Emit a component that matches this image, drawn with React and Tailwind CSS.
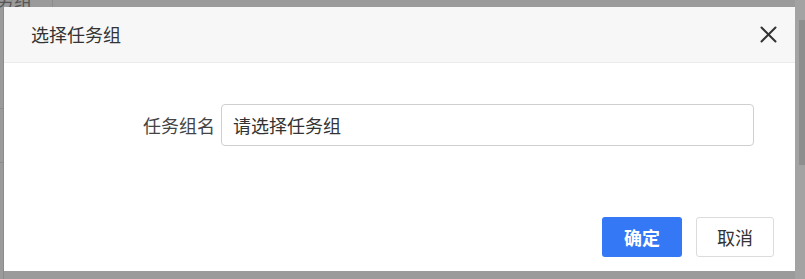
const font = { fontFamily: '"Noto Sans CJK SC", "Noto Sans", sans-serif' };

const Backdrop = () => (
  <div className="absolute inset-0 overflow-hidden">
    {/* faded page content behind the overlay */}
    <div className="absolute left-0 top-0 h-full w-[4px] border-r border-[#8c8c8c]"></div>
    <div className="absolute left-[52px] top-0 h-[7px] border-l border-[#8c8c8c]"></div>
    <div className="absolute left-[-4px] top-[-14px] text-[18px] text-[#555]">务组</div>
    <div className="absolute left-0 top-[108px] w-[4px] border-t border-[#8c8c8c]"></div>
    <div className="absolute left-0 top-[162px] w-[4px] border-t border-[#8c8c8c]"></div>
    <div className="absolute right-0 top-0 h-full w-[10px] bg-[#a3a3a3]">
      <div className="ml-[4px] mt-[20px] h-[145px] w-[6px] bg-[#8e8e8e]"></div>
    </div>
  </div>
);

const CloseIcon = () => (
  <svg width="17" height="17" viewBox="0 0 17 17" fill="none" stroke="currentColor" strokeWidth="2" strokeLinecap="round">
    <path d="M1.5 1.5 15.5 15.5" />
    <path d="M15.5 1.5 1.5 15.5" />
  </svg>
);

const App = () => {
  return (
    <div className="relative h-[279px] w-[805px] overflow-hidden bg-[#9b9b9b]" style={font}>
      <Backdrop />

      <div className="absolute left-[4px] top-[7px] flex h-[264px] w-[791px] flex-col bg-white">
        <div className="flex h-[56px] items-center justify-between border-b border-[#ebebeb] bg-[#f7f7f7] pl-[27px] pr-[17px]">
          <span className="text-[18px] text-[#333]">选择任务组</span>
          <button className="flex h-[20px] w-[20px] items-center justify-center text-[#333]">
            <CloseIcon />
          </button>
        </div>

        <div className="flex items-center pt-[41px]">
          <label className="w-[217px] pr-[6px] text-right text-[18px] text-[#444]">任务组名</label>
          <div className="flex h-[42px] w-[533px] items-center rounded-[4px] border border-[#cfcfcf] px-[11px] text-[18px] text-[#333]">
            请选择任务组
          </div>
        </div>

        <div className="mt-auto flex justify-end gap-[14px] pb-[14px] pr-[21px]">
          <button className="h-[40px] w-[80px] rounded-[3px] bg-[#3478f6] text-[18px] font-bold text-white">
            确定
          </button>
          <button className="h-[40px] w-[78px] rounded-[3px] border border-[#dcdcdc] bg-white text-[18px] text-[#333]">
            取消
          </button>
        </div>
      </div>
    </div>
  );
};

export default App;
